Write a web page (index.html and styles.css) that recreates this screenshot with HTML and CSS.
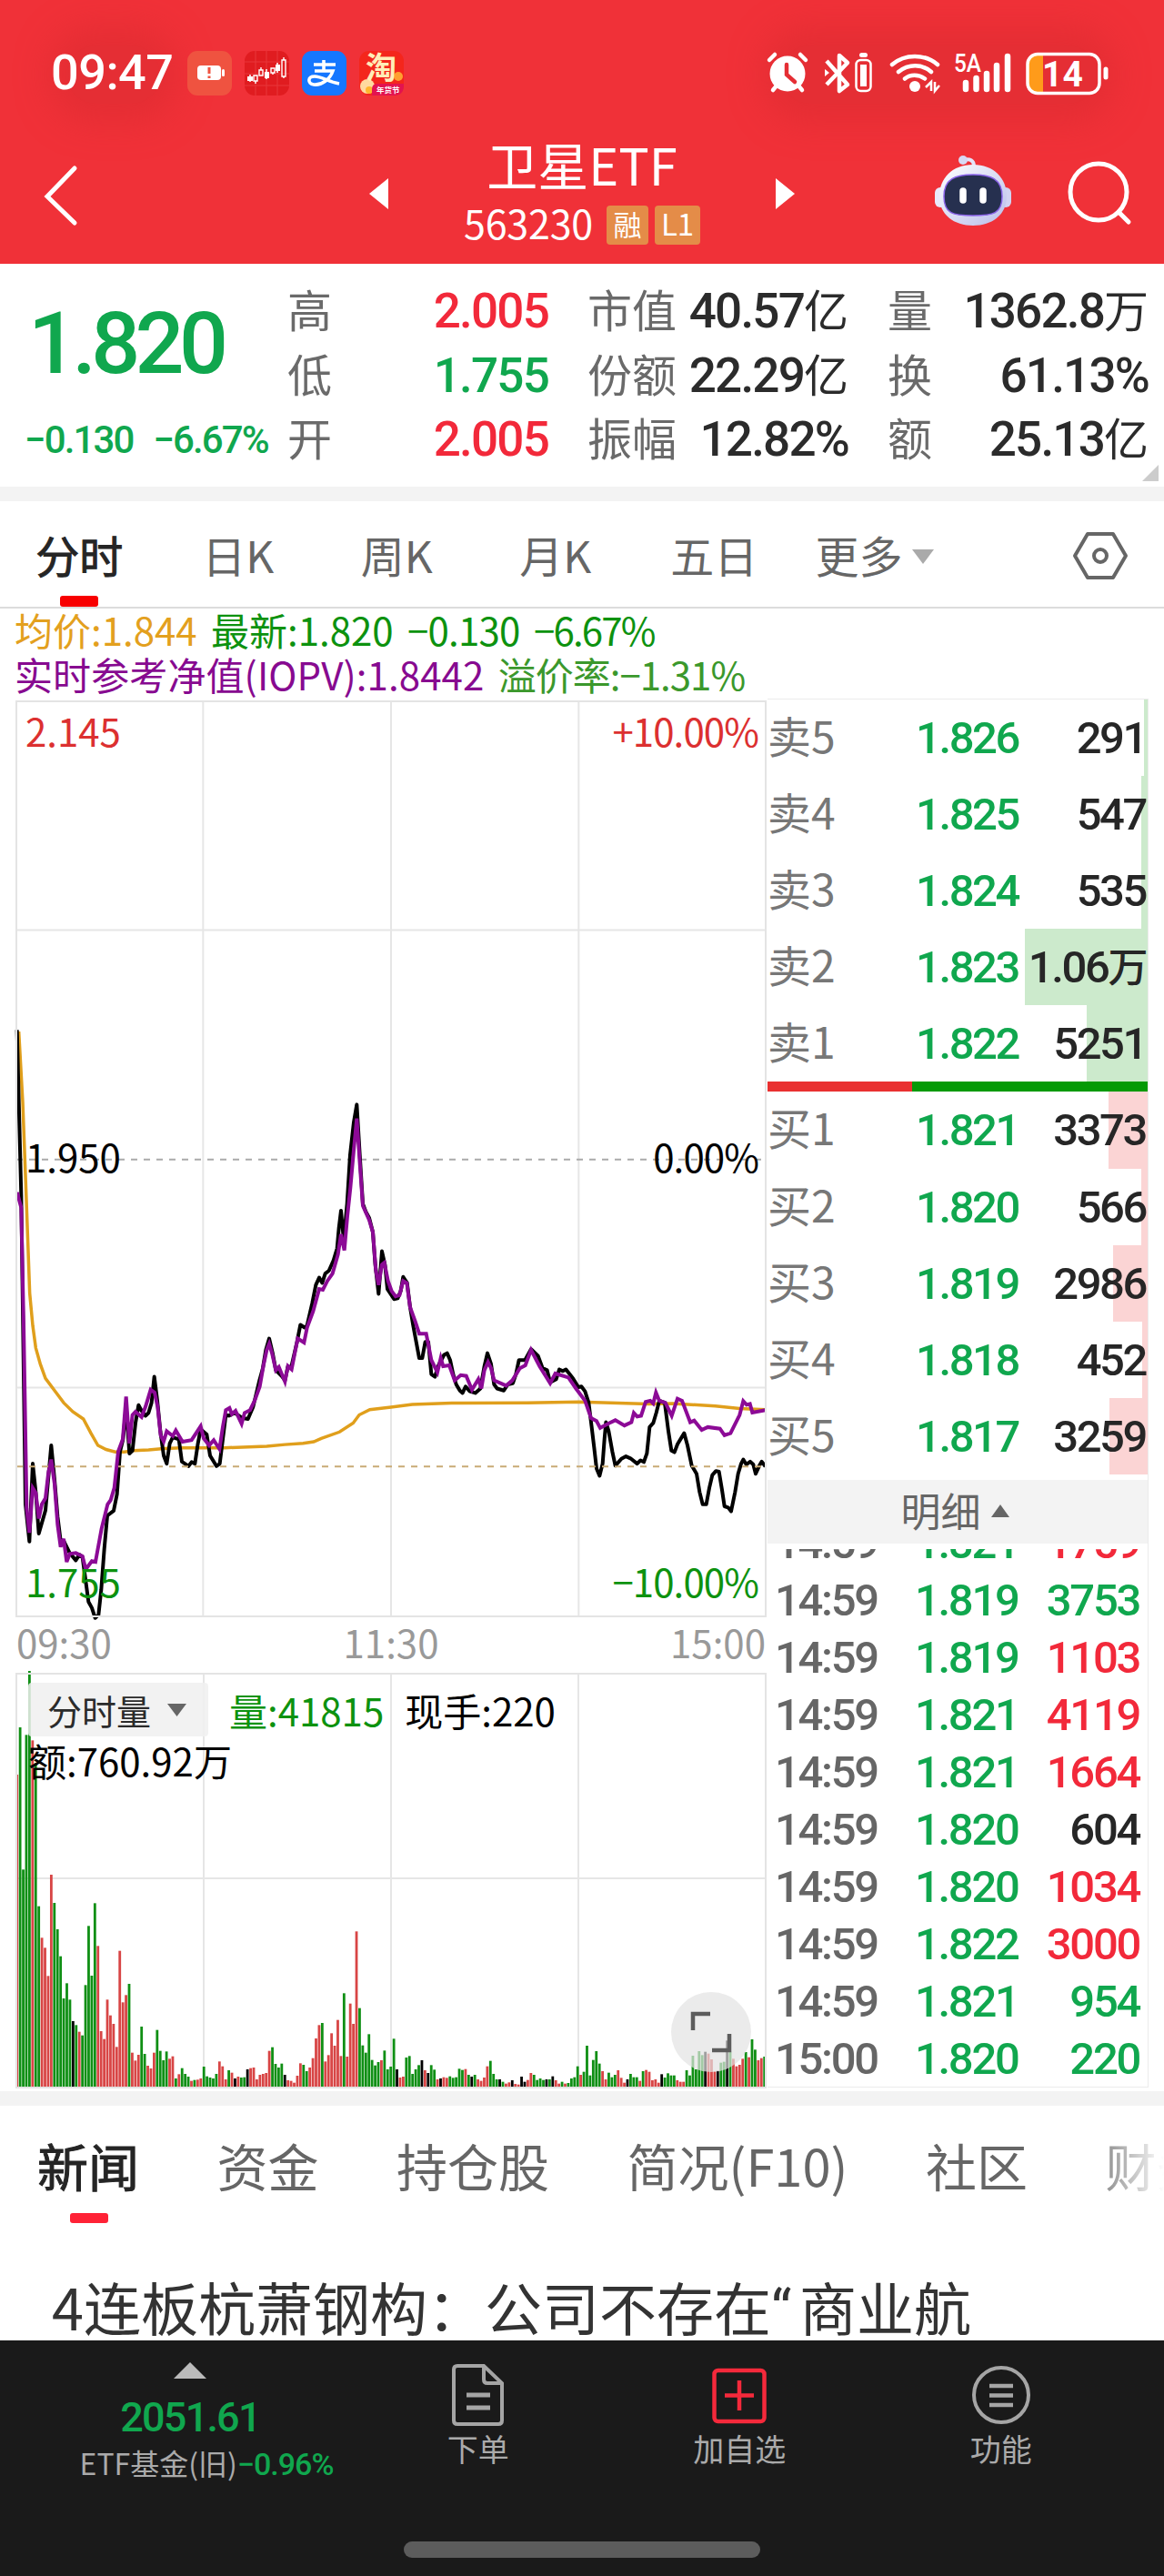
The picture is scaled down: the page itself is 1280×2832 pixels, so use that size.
FILE: index.html
```html
<!DOCTYPE html>
<html lang="zh-CN">
<head>
  <meta charset="UTF-8" />
  <meta name="viewport" content="width=device-width, initial-scale=1.0" />
  <meta name="theme-color" content="#f03138" />
  <title>卫星ETF 563230</title>
  <link rel="stylesheet" href="styles.css">
</head>
<body>

  <!-- HEADER -->
  <header class="header">
    <div class="status-bar">
      <span class="clock num">09:47</span>
      <div class="app-icons">
        <svg class="app-icon" viewBox="0 0 49 49">
          <rect width="49" height="49" rx="11" fill="#ef5340"/>
          <rect x="11" y="16" width="26" height="16" rx="4" fill="#fff"/>
          <rect x="38" y="20" width="3" height="8" rx="1.5" fill="#fff"/>
          <path d="M24 18v7M24 27.500v2.500" stroke="#ef5340" stroke-width="3"/>
        </svg>
        <svg class="app-icon" viewBox="0 0 49 49">
          <rect width="49" height="49" rx="11" fill="#e01c20"/>
          <path d="M12 0v49M24 0v49M36 0v49M0 12h49M0 25h49M0 38h49" stroke="#e8363a" stroke-width="1"/>
          <path d="M6 26v8M24 20v11M36 13v11" stroke="#fff" stroke-width="1.500"/>
          <path d="M3 28h6v5h-6zM22 23h5v7h-5zM34 15h5v7h-5z" fill="#fff"/>
          <path d="M10 27h4v6h-4zM12 33v3M16 21h4v6h-4zM18 18v3M29 19h4v5h-4zM31 24v2M41 10h4v18h-4zM43 7v3M43 28v2" fill="none" stroke="#fff" stroke-width="1.400"/>
        </svg>
        <svg class="app-icon" viewBox="0 0 49 49">
          <rect width="49" height="49" rx="11" fill="#1677ff"/>
          <path d="M13 15h24M24 10v12M14 22h20C31 31 22 38 13 37c-7-1-7-9 1-9 8 0 15 6 27 8" fill="none" stroke="#fff" stroke-width="3.600"/>
        </svg>
        <svg class="app-icon" viewBox="0 0 49 49">
          <rect width="49" height="49" rx="11" fill="#f4261c"/>
          <circle cx="43" cy="28" r="5" fill="#ffa030"/>
          <circle cx="9" cy="39" r="8" fill="#ffd9a0"/>
          <circle cx="11" cy="43" r="4" fill="#ffb52e"/>
          <path d="M14 49V42q0-6 6-6h29v2q0 11-11 11z" fill="#e3134f"/>
          <text class="app-text" x="7" y="31" font-size="34" fill="#ffedb8">淘</text>
          <text class="app-text" x="19" y="46" font-size="8.500" fill="#fff">年货节</text>
        </svg>
      </div>
      <svg class="status-icons" viewBox="840 54 384 52">
        <!-- alarm -->
        <ellipse cx="866" cy="81" rx="19.500" ry="19.500" fill="#fff"/>
        <path d="M846 66l6-6M886 66l-6-6M850 99l5-6M882 99l-5-6" stroke="#fff" stroke-width="4.500" stroke-linecap="round"/>
        <path d="M865 71v11l9 8" fill="none" stroke="#e52e34" stroke-width="4.500" stroke-linecap="round"/>
        <!-- bluetooth -->
        <path d="M909 67l23 26-9 7V61l9 8-23 24" fill="none" stroke="#fff" stroke-width="4.500" stroke-linejoin="round"/>
        <path d="M907 76l5 4-5 4z" fill="#fff"/>
        <rect x="941.500" y="66" width="16" height="34" rx="5" fill="none" stroke="#fff" stroke-width="2.500"/>
        <rect x="946" y="71" width="7" height="24" fill="#fff"/>
        <rect x="945" y="58" width="9" height="5" rx="2.500" fill="#fff"/>
        <!-- wifi -->
        <path d="M981 71c14-12 36-12 50 0M988 79c11-9 26-9 36 0M995 86.500c6-5 15-5 22 0" fill="none" stroke="#fff" stroke-width="4.500" stroke-linecap="round"/>
        <circle cx="1006" cy="95" r="6" fill="#fff"/>
        <path d="M1018 96l6-6v10M1033 94l-5 6v-10" fill="none" stroke="#fff" stroke-width="2.500"/>
        <!-- signal -->
        <text class="net-text" x="1049" y="79" font-size="27" textLength="30" lengthAdjust="spacingAndGlyphs" fill="#fff">5A</text>
        <path d="M1062 91v7M1073.500 86v12M1085 81v17M1096 72v26M1108 62v36" stroke="#fff" stroke-width="6.500" stroke-linecap="round"/>
        <!-- battery -->
        <path d="M1139 61h8v40h-8q-8 0-8-8v-24q0-8 8-8z" fill="#ff9b1a"/>
        <rect x="1130" y="59.500" width="79" height="43" rx="11" fill="none" stroke="#fff" stroke-width="3.500"/>
        <path d="M1216 76v9" stroke="#fff" stroke-width="5" stroke-linecap="round"/>
        <text class="net-text net-bold" x="1146" y="95" font-size="39" fill="#fff">14</text>
      </svg>
    </div>

    <div class="title-bar">
      <svg class="back" viewBox="0 0 40 68"><path d="M36 4L6 35l30 29" fill="none" stroke="#fff" stroke-width="5" stroke-linecap="round"/></svg>
      <div class="title-center">
        <svg class="switch" viewBox="0 0 21 34"><path d="M21 0v34L0 17z" fill="#fff"/></svg>
        <div class="title-box">
          <h1 class="title">卫星ETF</h1>
          <div class="subtitle">
            <span class="code">563230</span>
            <span class="badge">融</span>
            <span class="badge badge-level">L1</span>
          </div>
        </div>
        <svg class="switch" viewBox="0 0 21 34"><path d="M0 0l21 17L0 34z" fill="#fff"/></svg>
      </div>
      <div class="title-actions">
        <svg class="robot" viewBox="0 0 84 80">
          <defs>
            <linearGradient id="helmet" x1="0" y1="0" x2="1" y2="1">
              <stop offset="0" stop-color="#fff"/>
              <stop offset="1" stop-color="#b9bdea"/>
            </linearGradient>
          </defs>
          <path d="M31 6q12-3 12 7" fill="none" stroke="#e4e4fa" stroke-width="4"/>
          <circle cx="31" cy="6" r="5" fill="#d8d9f5"/>
          <rect x="0" y="36" width="12" height="22" rx="6" fill="#e9e9fb"/>
          <rect x="72" y="36" width="12" height="22" rx="6" fill="#d2d3f2"/>
          <path d="M42 11C65 11 79 26 79 46S63 78 42 78 5 66 5 46 19 11 42 11z" fill="url(#helmet)"/>
          <path d="M42 22c20 0 32 5 32 24S64 67 42 67 10 65 10 46s12-24 32-24z" fill="#26304f" stroke="#8a63e8" stroke-width="1.500"/>
          <path d="M31 40v10M53 40v10" stroke="#fff" stroke-width="7.500" stroke-linecap="round"/>
        </svg>
        <svg class="search" viewBox="0 0 74 72"><circle cx="35" cy="35" r="31" fill="none" stroke="#fff" stroke-width="5"/><path d="M57 57l11 11" stroke="#fff" stroke-width="5" stroke-linecap="round"/></svg>
      </div>
    </div>
  </header>

  <!-- QUOTE -->
  <section class="quote">
    <div class="quote-price">
      <div class="price num green">1.820</div>
      <div class="change num green"><span>−0.130</span><span>−6.67%</span></div>
    </div>
    <div class="quote-grid">
      <div class="cell"><span>高</span><b class="num red">2.005</b></div>
      <div class="cell"><span>市值</span><b class="num">40.57<i>亿</i></b></div>
      <div class="cell"><span>量</span><b class="num">1362.8<i>万</i></b></div>
      <div class="cell"><span>低</span><b class="num green">1.755</b></div>
      <div class="cell"><span>份额</span><b class="num">22.29<i>亿</i></b></div>
      <div class="cell"><span>换</span><b class="num">61.13%</b></div>
      <div class="cell"><span>开</span><b class="num red">2.005</b></div>
      <div class="cell"><span>振幅</span><b class="num">12.82%</b></div>
      <div class="cell"><span>额</span><b class="num">25.13<i>亿</i></b></div>
    </div>
    <svg class="corner" viewBox="0 0 18 18"><path d="M18 0v18H0z" fill="#ccc"/></svg>
  </section>

  <!-- CHART TABS -->
  <nav class="chart-tabs">
    <a class="chart-tab active">分时</a>
    <a class="chart-tab">日K</a>
    <a class="chart-tab">周K</a>
    <a class="chart-tab">月K</a>
    <a class="chart-tab">五日</a>
    <a class="chart-more">更多 <svg viewBox="0 0 24 16"><path d="M0 0h24L12 16z" fill="#aaa"/></svg></a>
    <svg class="settings" viewBox="0 0 60 54"><path d="M16 3h28l14 24-14 24H16L2 27z" fill="none" stroke="#666" stroke-width="4" stroke-linejoin="round"/><circle cx="30" cy="27" r="7" fill="none" stroke="#666" stroke-width="4"/></svg>
  </nav>

  <!-- INFO LINES -->
  <div class="legend">
    <p><span class="avg">均价:1.844</span> <span class="last">最新:1.820</span> <span class="last diff">−0.130</span> <span class="last percent">−6.67%</span></p>
    <p><span class="iopv">实时参考净值(IOPV):1.8442</span> <span class="premium">溢价率:−1.31%</span></p>
  </div>

  <main class="board">
    <div class="charts">
      <!-- PRICE CHART -->
      <div class="price-chart">
        <svg class="plot" viewBox="54 -737 2472 2253" preserveAspectRatio="none">
          <g fill="none" stroke="#e6e6e6" stroke-width="2">
            <path d="M670-737V1516M1290-737V1516M1909-737V1516M54-174H2526M54 953H2526"/>
          </g>
          <path d="M54 391H2526" stroke="#aaa" stroke-width="2" stroke-dasharray="7 7"/>
          <polyline fill="none" stroke="#e09f1c" stroke-width="3.500" points="62,76 75,250 85,450 98,720 108,800 118,855 133,895 150,930 180,960 210,990 240,1012 275,1030 300,1065 323,1095 350,1105 380,1111 410,1111 440,1108 490,1106 540,1103 600,1101 740,1101 880,1097 940,1093 1000,1090 1035,1086 1060,1078 1120,1062 1165,1040 1185,1020 1220,1007 1290,1001 1360,994 1490,991 1740,990 1910,988 2040,991 2140,993 2220,992 2360,998 2440,1004 2525,1007"/>
          <polyline fill="none" stroke="#000" stroke-width="4" stroke-linejoin="round" points="56,72 70,480 84,1240 97,1332 108,1140 118,1210 128,1312 150,1255 169,1095 180,1180 190,1270 200,1330 210,1330 230,1360 250,1378 262,1364 272,1370 282,1425 292,1480 303,1495 314,1520 325,1512 334,1450 344,1350 354,1268 375,1256 386,1215 396,1110 406,1080 416,1000 427,1115 437,1108 447,1040 457,996 467,1010 480,1022 490,1015 500,990 509,926 519,985 529,1060 540,1120 550,1140 560,1090 570,1075 590,1080 600,1135 622,1146 632,1136 643,1140 653,1090 662,1055 682,1068 693,1120 714,1146 725,1140 735,1080 745,1020 755,1022 775,1015 800,1028 818,1030 835,1000 856,935 867,905 877,860 888,832 900,870 910,910 930,925 940,935 950,900 960,905 980,840 991,798 1005,805 1013,800 1030,745 1042,700 1053,682 1063,695 1073,672 1085,665 1100,640 1112,610 1118,560 1125,517 1134,590 1145,500 1155,380 1167,300 1177,256 1187,380 1197,500 1207,520 1218,535 1230,570 1238,650 1249,722 1260,617 1270,650 1278,710 1300,735 1312,733 1322,715 1330,680 1343,695 1353,755 1363,800 1373,840 1383,880 1393,880 1403,840 1413,840 1423,920 1435,926 1445,900 1465,872 1475,868 1485,885 1495,920 1505,945 1517,960 1526,966 1536,950 1550,962 1568,966 1585,955 1598,900 1608,868 1620,895 1630,945 1640,955 1662,960 1675,945 1692,942 1702,920 1712,885 1732,885 1752,858 1775,875 1790,905 1805,910 1815,940 1835,932 1845,908 1857,912 1867,908 1890,930 1908,952 1918,950 1930,962 1942,990 1952,1050 1960,1100 1968,1152 1978,1170 1988,1140 1994,1080 1999,1038 2008,1060 2020,1110 2030,1145 2050,1128 2065,1122 2080,1127 2102,1140 2113,1132 2124,1136 2134,1115 2143,1050 2155,1040 2165,1015 2175,985 2193,990 2205,1060 2215,1108 2225,1112 2235,1092 2257,1065 2268,1095 2282,1145 2298,1165 2308,1210 2318,1240 2330,1240 2340,1200 2350,1168 2362,1158 2372,1160 2382,1205 2390,1245 2402,1248 2412,1257 2425,1210 2435,1165 2445,1140 2452,1130 2462,1142 2475,1135 2485,1142 2493,1165 2505,1145 2513,1135 2525,1147"/>
          <polyline fill="none" stroke="#8c0a96" stroke-width="4" points="52,476 58,476 70,510 78,800 88,1250 97,1310 108,1200 118,1212 128,1275 138,1240 150,1225 160,1160 169,1130 180,1190 190,1290 200,1345 210,1325 220,1382 230,1362 250,1360 272,1368 283,1400 303,1380 315,1382 335,1300 355,1240 365,1230 377,1200 390,1110 405,1080 416,975 427,1090 437,1020 447,1012 467,1025 480,1000 497,958 510,965 520,1000 530,1070 540,1085 550,1060 570,1072 580,1058 602,1086 632,1082 662,1048 672,1078 690,1095 705,1082 724,1104 735,1050 745,1008 757,1003 765,1018 777,1010 797,1042 807,1015 825,1008 840,985 857,950 870,895 880,860 888,845 898,870 910,910 920,902 940,938 950,900 962,908 982,832 1003,842 1013,805 1033,765 1053,710 1065,712 1080,690 1097,672 1115,625 1125,575 1136,615 1146,530 1156,460 1168,360 1177,290 1187,400 1197,505 1218,540 1230,570 1240,665 1249,700 1260,650 1268,645 1280,690 1292,715 1305,728 1318,725 1330,690 1342,695 1353,755 1370,790 1383,820 1406,820 1423,885 1443,915 1454,880 1462,900 1482,898 1500,935 1520,922 1538,924 1557,958 1578,932 1588,955 1598,910 1610,890 1620,905 1630,935 1670,948 1690,935 1715,905 1733,898 1752,860 1780,900 1815,942 1832,918 1875,928 1900,955 1930,985 1950,1028 1968,1035 1980,1052 2010,1040 2030,1033 2060,1046 2083,1038 2091,1015 2102,1024 2115,1022 2130,988 2145,985 2155,992 2164,965 2175,985 2195,990 2216,1022 2235,980 2250,985 2277,1038 2290,1034 2315,1057 2335,1050 2375,1054 2390,1070 2410,1065 2440,1020 2452,986 2463,995 2474,993 2482,1014 2525,1008"/>
          <path d="M54 1147H2526" stroke="#c9ab75" stroke-width="2" stroke-dasharray="7 7"/>
        </svg>
        <div class="axis axis-top red-dark"><span>2.145</span><span class="percent">+10.00%</span></div>
        <div class="axis axis-mid"><span>1.950</span><span class="percent">0.00%</span></div>
        <div class="axis axis-bottom green-dark"><span>1.755</span><span class="percent">−10.00%</span></div>
      </div>
      <div class="time-axis"><span>09:30</span><span>11:30</span><span>15:00</span></div>

      <!-- VOLUME CHART -->
      <div class="volume-chart">
        <svg class="plot" viewBox="0 0 824 455" preserveAspectRatio="none">
          <path d="M206 0V455M412 0V455M618 0V455M0 225H824" fill="none" stroke="#e6e6e6" stroke-width="2"/>
          <g id="bars"></g>
        </svg>
        <div class="volume-legend">
          <span class="select">分时量 <svg viewBox="0 0 21 14"><path d="M0 0h21L10.500 14z" fill="#666"/></svg></span>
          <span class="green-dark">量:41815</span>
          <span>现手:220</span>
        </div>
        <div class="amount">额:760.92万</div>
        <svg class="expand" viewBox="0 0 88 88"><circle cx="44" cy="44" r="44" fill="#e3e3e3" fill-opacity=".7"/><path d="M24 42V24h19M64 46v18H45" fill="none" stroke="#5c5c5c" stroke-width="4.500"/></svg>
      </div>
    </div>

    <!-- ORDER BOOK -->
    <aside class="book">
      <div class="order sell"><span>卖5</span><b class="num green">1.826</b><em class="num">291</em><div class="depth" style="width:4px"></div></div>
      <div class="order sell"><span>卖4</span><b class="num green">1.825</b><em class="num">547</em><div class="depth" style="width:7px"></div></div>
      <div class="order sell"><span>卖3</span><b class="num green">1.824</b><em class="num">535</em><div class="depth" style="width:7px"></div></div>
      <div class="order sell"><span>卖2</span><b class="num green">1.823</b><em class="num">1.06<i>万</i></em><div class="depth" style="width:135px"></div></div>
      <div class="order sell"><span>卖1</span><b class="num green">1.822</b><em class="num">5251</em><div class="depth" style="width:67px"></div></div>
      <div class="ratio"><div style="width:38%"></div></div>
      <div class="order buy"><span>买1</span><b class="num green">1.821</b><em class="num">3373</em><div class="depth" style="width:43px"></div></div>
      <div class="order buy"><span>买2</span><b class="num green">1.820</b><em class="num">566</em><div class="depth" style="width:7px"></div></div>
      <div class="order buy"><span>买3</span><b class="num green">1.819</b><em class="num">2986</em><div class="depth" style="width:38px"></div></div>
      <div class="order buy"><span>买4</span><b class="num green">1.818</b><em class="num">452</em><div class="depth" style="width:6px"></div></div>
      <div class="order buy"><span>买5</span><b class="num green">1.817</b><em class="num">3259</em><div class="depth" style="width:42px"></div></div>

      <div class="detail-head">明细 <svg viewBox="0 0 20 14"><path d="M0 14h20L10 0z" fill="#666"/></svg></div>
      <div class="ticks num">
        <div class="tick"><span>14:59</span><b class="green">1.821</b><em class="red">1759</em></div>
        <div class="tick"><span>14:59</span><b class="green">1.819</b><em class="green">3753</em></div>
        <div class="tick"><span>14:59</span><b class="green">1.819</b><em class="red">1103</em></div>
        <div class="tick"><span>14:59</span><b class="green">1.821</b><em class="red">4119</em></div>
        <div class="tick"><span>14:59</span><b class="green">1.821</b><em class="red">1664</em></div>
        <div class="tick"><span>14:59</span><b class="green">1.820</b><em>604</em></div>
        <div class="tick"><span>14:59</span><b class="green">1.820</b><em class="red">1034</em></div>
        <div class="tick"><span>14:59</span><b class="green">1.822</b><em class="red">3000</em></div>
        <div class="tick"><span>14:59</span><b class="green">1.821</b><em class="green">954</em></div>
        <div class="tick"><span>15:00</span><b class="green">1.820</b><em class="green">220</em></div>
      </div>
    </aside>
  </main>

  <!-- NEWS -->
  <nav class="news-tabs">
    <a class="news-tab active">新闻</a>
    <a class="news-tab">资金</a>
    <a class="news-tab">持仓股</a>
    <a class="news-tab">简况(F10)</a>
    <a class="news-tab">社区</a>
    <a class="news-tab">财务</a>
  </nav>
  <article class="news-item">4连板杭萧钢构：公司不存在<span class="quote-mark">“</span>商业航</article>

  <!-- BOTTOM BAR -->
  <footer class="bottom-bar">
    <div class="index">
      <svg class="index-arrow" viewBox="0 0 36 18"><path d="M0 18h36L18 0z" fill="#bbb"/></svg>
      <div class="index-value num green">2051.61</div>
      <div class="index-name">ETF基金(旧)<span class="num green">−0.96%</span></div>
    </div>
    <a class="action">
      <svg viewBox="0 0 68 68"><path d="M11 2h29l20 19v41q0 4-4 4H11q-4 0-4-4V6q0-4 4-4zM40 2v15q0 4 4 4h16" fill="none" stroke="#a5a5a5" stroke-width="4"/><path d="M21 34h26M21 48h26" stroke="#a5a5a5" stroke-width="5"/></svg>
      下单
    </a>
    <a class="action">
      <svg viewBox="0 0 68 68"><rect x="6.500" y="7" width="55" height="56" rx="4" fill="none" stroke="#f5293b" stroke-width="4.500"/><path d="M34 18v33M18 34.500h32" stroke="#f5293b" stroke-width="4.500"/></svg>
      加自选
    </a>
    <a class="action">
      <svg viewBox="0 0 68 68"><circle cx="34" cy="34" r="30" fill="none" stroke="#a5a5a5" stroke-width="4"/><path d="M21 24h26M21 34.500h26M21 45h26" stroke="#a5a5a5" stroke-width="4.500"/></svg>
      功能
    </a>
    <div class="home-indicator"></div>
  </footer>

  <script>
    // one bar per minute: r = up, g = down, b = flat
    const volume = "r1032 g1188 g719 g1163 g1374 r1145 g1070 g598 r494 r461 r368 r702 g609 g522 g433 g294 g344 g290 b219 g206 " +
      "r184 g172 g338 g533 g369 g608 r467 r186 r160 r290 r238 r210 r134 r451 r281 r305 g342 r115 r89 r108 " +
      "g201 g111 r72 r63 r115 g190 g121 g90 g119 r95 r103 g30 r44 g64 g45 g36 r22 g25 r26 r30 " +
      "g69 g37 g33 g30 g45 r86 r70 r27 g57 r49 b30 r36 g33 g34 b60 r64 r66 r27 r42 r45 " +
      "r48 r121 g133 g78 g66 g79 b42 r24 r22 r16 r39 r80 g75 g54 r66 r97 r162 r206 g213 r86 " +
      "r107 r179 r138 r223 r104 g311 r102 r277 r210 r515 g262 g139 g115 g176 g91 g73 g84 r90 g122 g60 " +
      "g69 g161 b60 r33 r36 g99 g104 g45 g60 g74 b90 r57 b48 g74 g59 r27 b30 r34 r32 g37 " +
      "g32 g34 g62 g58 r61 g42 b36 g42 r27 r22 r33 r70 g88 g45 g27 b27 g19 r13 r17 b24 " +
      "r12 r10 b36 b19 r25 r48 g42 g25 g30 g25 b27 g27 b37 r24 r13 g19 r13 g15 g30 g34 " +
      "g70 r42 g52 g138 g40 g91 g120 g79 r54 r27 g49 g34 g42 r57 r32 r16 b27 g45 g34 g34 " +
      "r22 g54 r58 r52 r24 r27 r16 b44 g33 g47 g40 g40 r24 r19 r19 g57 g40 g105 g60 g120 " +
      "g107 b118 r112 r93 r53 b55 g82 g85 b155 g118 r95 r70 r75 r95 g117 r100 g159 g125 r90 r97 g102";
    const colors = { r: "#d84545", g: "#0f8f14", b: "#000" };
    const bars = document.getElementById("bars");

    volume.split(" ").forEach((item, i) => {
      const h = Number(item.slice(1)) / 3;
      const bar = document.createElementNS("http://www.w3.org/2000/svg", "rect");
      bar.setAttribute("x", i * 3.425 - 0.7);
      bar.setAttribute("y", 455 - h);
      bar.setAttribute("width", 2.8);
      bar.setAttribute("height", h);
      bar.setAttribute("fill", colors[item[0]]);
      bars.appendChild(bar);
    });
  </script>

</body>
</html>
```

FILE: styles.css
```css
* { margin: 0; padding: 0; box-sizing: border-box; }
html, body {
  width: 1280px;
  height: 2832px;
  overflow: hidden;
  background: #fff;
  color: #2b2b2b;
  font-family: "Noto Sans CJK SC", sans-serif;
}
body {
  display: flex;
  flex-direction: column;
}

svg { display: block; flex-shrink: 0; overflow: visible; }
b, em, i { font-weight: inherit; font-style: normal; }

.num {
  font-family: Roboto, "Noto Sans CJK SC", sans-serif;
  font-weight: 500;
}
.green { color: #10a74e; }
.red { color: #f2293a; }
.green-dark { color: #0d920f; }
.red-dark { color: #dc3030; }

/* HEADER */
.header {
  height: 290px;
  background: #f03138;
  color: #fff;
}

.status-bar {
  position: relative;
  display: flex;
  align-items: center;
  height: 146px;
  padding: 14px 56px 0 56px;
}
.status-bar::before, .status-bar::after {
  content: "";
  position: absolute;
  top: 50px;
  height: 64px;
  border-radius: 30px;
  background: #e52e34;
  box-shadow: 0 0 34px 22px #e52e34;
}
.status-bar::before { left: 75px; width: 100px; }
.status-bar::after { left: 860px; width: 345px; }

.clock, .app-icons, .status-icons { position: relative; z-index: 1; }
.clock {
  width: 150px;
  font-size: 54px;
  line-height: 58px;
  letter-spacing: -0.5px;
}
.app-icons { display: flex; gap: 14px; }
.app-icon { width: 49px; height: 49px; }
.app-text { font-family: "Noto Sans CJK SC", sans-serif; font-weight: 700; }
.net-text { font-family: Roboto, sans-serif; font-weight: 500; }
.net-bold { font-weight: 700; }
.status-icons {
  width: 384px;
  height: 52px;
  margin-left: auto;
}

.title-bar {
  display: grid;
  grid-template-columns: 406px 468px 406px;
  align-items: center;
  height: 134px;
}
.back { width: 40px; height: 68px; margin: 3px 0 0 46px; }
.title-center {
  display: flex;
  justify-content: space-between;
  align-items: center;
}
.switch { width: 21px; height: 34px; }
.title-box { text-align: center; }
.title {
  font-size: 56px;
  line-height: 68px;
  font-weight: 400;
}
.subtitle {
  display: flex;
  justify-content: center;
  align-items: center;
  gap: 7px;
  height: 66px;
}
.code {
  margin: -7px 8px 0 0;
  font-size: 43px;
  line-height: 50px;
  letter-spacing: -0.2px;
}
.badge {
  width: 46px;
  height: 43px;
  border-radius: 4px;
  background: #e48c48;
  font-size: 31px;
  line-height: 39px;
}
.badge-level { width: 50px; font-size: 33px; }
.title-actions { display: flex; padding-left: 154px; }
.robot { width: 84px; height: 80px; margin-top: -6px; }
.search { width: 74px; height: 72px; margin-left: 61px; }

/* QUOTE */
.quote {
  position: relative;
  display: flex;
  height: 261px;
  border-bottom: 16px solid #f3f3f3;
}
.quote-price { width: 316px; padding-top: 38px; }
.price {
  padding-left: 31px;
  font-size: 95px;
  line-height: 100px;
  letter-spacing: -5.6px;
}
.change {
  display: flex;
  gap: 22px;
  margin-top: 26px;
  padding-left: 27px;
  font-size: 42px;
  line-height: 60px;
  letter-spacing: -1.9px;
  white-space: nowrap;
}
.quote-grid {
  display: grid;
  grid-template-columns: repeat(3, 287px);
  grid-auto-rows: 70.5px;
  column-gap: 43px;
  padding-top: 14px;
}
.cell {
  display: flex;
  justify-content: space-between;
  align-items: baseline;
  font-size: 49px;
  line-height: 70px;
  white-space: nowrap;
}
.cell span { color: #6a6a6a; }
.cell b { font-size: 53px; letter-spacing: -1.8px; }
.cell i { font-size: 49px; font-weight: 400; letter-spacing: 0; }
.corner {
  position: absolute;
  right: 6px;
  bottom: 6px;
  width: 18px;
  height: 18px;
}

/* CHART TABS */
.chart-tabs {
  display: flex;
  align-items: center;
  height: 118px;
  border-bottom: 2px solid #dcdcdc;
  color: #666;
  font-size: 48px;
}
.chart-tab {
  position: relative;
  width: 174.5px;
  line-height: 115px;
  text-align: center;
}
.chart-tab.active, .news-tab.active {
  color: #252525;
  -webkit-text-stroke: 1px #252525;
}
.chart-tab.active::after {
  content: "";
  position: absolute;
  left: 66px;
  bottom: 0;
  width: 42px;
  height: 12px;
  border-radius: 3px;
  background: #f80000;
}
.chart-more {
  display: flex;
  align-items: center;
  gap: 10px;
  padding-left: 24px;
}
.chart-more svg { width: 24px; height: 16px; margin-top: 6px; }
.settings { width: 60px; height: 54px; margin: 4px 40px 0 auto; }

/* INFO LINES */
.legend {
  height: 101px;
  margin-top: -2px;
  padding-left: 16px;
  font-size: 42px;
  line-height: 49px;
  white-space: nowrap;
}
.legend span { margin-right: 6px; }
.legend .diff { letter-spacing: -0.8px; }
.legend .percent { letter-spacing: -1.8px; }
.avg { color: #e3a01e; }
.last { color: #0d920f; }
.iopv { color: #870a90; letter-spacing: 0.1px; }
.premium { color: #3b982c; letter-spacing: -1px; }

/* BOARD */
.board {
  display: flex;
  height: 1531px;
  border-bottom: 4px solid #fff;
}
.charts { width: 844px; padding: 3px 0 0 18px; }
.price-chart, .volume-chart {
  position: relative;
  width: 824px;
  outline: 2px solid #e4e4e4;
  outline-offset: -1px;
}
.price-chart { height: 1006px; }
.volume-chart { height: 455px; font-size: 42px; color: #000; }
.plot { width: 100%; height: 100%; }
.price-chart .plot > * { vector-effect: non-scaling-stroke; }
.price-chart .plot g path { vector-effect: non-scaling-stroke; }

.axis {
  position: absolute;
  left: 10px;
  right: 8px;
  display: flex;
  justify-content: space-between;
  font-size: 42px;
  line-height: 50px;
}
.axis .percent { letter-spacing: -0.9px; }
.axis-top { top: 7px; }
.axis-mid { top: 475px; color: #000; }
.axis-bottom { top: 942px; }

.time-axis {
  display: flex;
  justify-content: space-between;
  width: 824px;
  height: 63px;
  color: #999;
  font-size: 42px;
  line-height: 56px;
}

.volume-legend {
  position: absolute;
  top: 10px;
  left: 13px;
  display: flex;
  align-items: center;
  line-height: 54px;
}
.volume-legend > span { margin-right: 23px; }
.select {
  display: flex;
  align-items: center;
  gap: 18px;
  width: 198px;
  height: 59px;
  padding-left: 21px;
  border-radius: 4px;
  background: rgba(240, 240, 240, 0.85);
  color: #2b2b2b;
  font-size: 38px;
}
.select svg { width: 21px; height: 14px; }
.amount {
  position: absolute;
  top: 68px;
  left: 13px;
  line-height: 54px;
}
.expand {
  position: absolute;
  left: 720px;
  top: 350px;
  width: 88px;
  height: 88px;
}

/* ORDER BOOK */
.book {
  width: 419px;
  height: 1527px;
  border: 1px solid #ebebeb;
  border-left: none;
}
.order {
  position: relative;
  display: grid;
  grid-template-columns: 163px 120px 1fr;
  align-items: baseline;
  height: 84.1px;
  padding: 0 2px 0 0;
  color: #777;
  font-size: 48px;
  line-height: 76px;
  white-space: nowrap;
}
.order b, .order em { font-size: 49px; letter-spacing: -2.4px; }
.order > * { position: relative; z-index: 1; }
.order em, .tick em { color: #262626; text-align: right; }
.order i { font-size: 44px; }
.order .depth {
  position: absolute;
  z-index: 0;
  top: 0;
  right: 0;
  height: 100%;
}
.sell .depth { background: #cceacc; }
.buy .depth { background: #fbd4d4; }
.ratio {
  height: 11px;
  background: #049a06;
}
.ratio div { height: 100%; background: #e93030; }

.detail-head {
  display: flex;
  justify-content: center;
  align-items: center;
  gap: 11px;
  height: 70px;
  margin-top: 6px;
  padding: 0 6px 4px 0;
  background: #f3f3f3;
  color: #666;
  font-size: 44px;
  line-height: 60px;
}
.detail-head svg { width: 20px; height: 14px; margin-top: 3px; }

/* first row is cut by the scroll position */
.ticks {
  display: flex;
  flex-direction: column;
  justify-content: flex-end;
  height: 591px;
  margin-top: 6px;
  overflow: hidden;
  font-size: 49px;
  letter-spacing: -2.3px;
}
.tick {
  display: grid;
  grid-template-columns: 154px 120px 1fr;
  flex-shrink: 0;
  height: 63px;
  padding: 0 9px 0 8px;
  line-height: 66px;
  color: #666;
}
.tick em.red { color: #f2293a; }
.tick em.green { color: #10a74e; }

/* NEWS */
.news-tabs {
  position: relative;
  display: flex;
  gap: 85.5px;
  height: 160px;
  padding-left: 41px;
  border-top: 16px solid #f3f3f3;
  color: #666;
  font-size: 56px;
  line-height: 129px;
  white-space: nowrap;
  overflow: hidden;
}
.news-tabs::after {
  content: "";
  position: absolute;
  top: 0;
  right: 0;
  width: 90px;
  height: 100%;
  background: linear-gradient(to right, rgba(255, 255, 255, 0), #fff);
}
.news-tab { position: relative; }
.news-tab.active::after {
  content: "";
  position: absolute;
  left: 36px;
  top: 118px;
  width: 42px;
  height: 11px;
  border-radius: 3px;
  background: #ff2236;
}
.news-item {
  height: 114px;
  padding: 31px 57px 0;
  color: #333;
  font-size: 63px;
  line-height: 90px;
  white-space: nowrap;
}
.quote-mark {
  display: inline-block;
  width: 31px;
  font-family: Roboto, sans-serif;
}

/* BOTTOM BAR */
.bottom-bar {
  position: relative;
  display: flex;
  height: 259px;
  padding-top: 24px;
  background: #1a1a1a;
  color: #aaa;
}
.index {
  display: flex;
  flex-direction: column;
  align-items: center;
  width: 382px;
  padding-left: 36px;
}
.index-arrow { width: 36px; height: 18px; }
.index-value {
  margin-top: 17px;
  font-size: 45px;
  line-height: 52px;
  letter-spacing: -1.8px;
}
.index-name {
  padding-left: 36px;
  font-size: 32px;
  line-height: 46px;
  white-space: nowrap;
}
.index-name .num { font-size: 34px; letter-spacing: -1px; }
.action {
  display: flex;
  flex-direction: column;
  align-items: center;
  width: 287.5px;
  padding-top: 2px;
  font-size: 34px;
  line-height: 50px;
}
.action svg { width: 68px; height: 68px; }
.home-indicator {
  position: absolute;
  left: 444px;
  bottom: 20px;
  width: 392px;
  height: 18px;
  border-radius: 9px;
  background: #5c5c5c;
}
```
